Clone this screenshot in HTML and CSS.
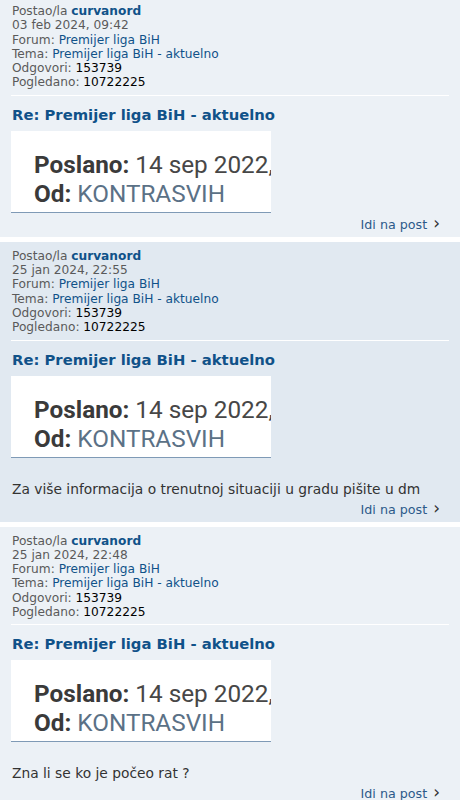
FILE: index.html
```html
<!DOCTYPE html>
<html lang="bs">
<head>
<meta charset="utf-8">
<title>Premijer liga BiH - aktuelno</title>
<link rel="stylesheet" href="styles.css">
</head>
<body>
<div class="posts">
  <div class="post bg1">
    <div class="meta">
      <div>Postao/la <a class="user" href="#">curvanord</a></div>
      <div>03 feb 2024, 09:42</div>
      <div>Forum: <a href="#">Premijer liga BiH</a></div>
      <div>Tema: <a href="#">Premijer liga BiH - aktuelno</a></div>
      <div>Odgovori: <strong>153739</strong></div>
      <div>Pogledano: <strong>10722225</strong></div>
    </div>
    <h3 class="title"><a href="#">Re: Premijer liga BiH - aktuelno</a></h3>
    <div class="content">
      <div class="shot">
        <div class="shot-line"><b>Poslano:</b> 14 sep 2022,</div>
        <div class="shot-line"><b>Od:</b> <span class="shot-user">KONTRASVIH</span></div>
      </div>
    </div>
    <div class="jump"><a href="#">Idi na post <span class="chev">&#x203A;</span></a></div>
  </div>

  <div class="post bg2">
    <div class="meta">
      <div>Postao/la <a class="user" href="#">curvanord</a></div>
      <div>25 jan 2024, 22:55</div>
      <div>Forum: <a href="#">Premijer liga BiH</a></div>
      <div>Tema: <a href="#">Premijer liga BiH - aktuelno</a></div>
      <div>Odgovori: <strong>153739</strong></div>
      <div>Pogledano: <strong>10722225</strong></div>
    </div>
    <h3 class="title"><a href="#">Re: Premijer liga BiH - aktuelno</a></h3>
    <div class="content">
      <div class="shot">
        <div class="shot-line"><b>Poslano:</b> 14 sep 2022,</div>
        <div class="shot-line"><b>Od:</b> <span class="shot-user">KONTRASVIH</span></div>
      </div>
      <p class="text">Za više informacija o trenutnoj situaciji u gradu pišite u dm</p>
    </div>
    <div class="jump"><a href="#">Idi na post <span class="chev">&#x203A;</span></a></div>
  </div>

  <div class="post bg1">
    <div class="meta">
      <div>Postao/la <a class="user" href="#">curvanord</a></div>
      <div>25 jan 2024, 22:48</div>
      <div>Forum: <a href="#">Premijer liga BiH</a></div>
      <div>Tema: <a href="#">Premijer liga BiH - aktuelno</a></div>
      <div>Odgovori: <strong>153739</strong></div>
      <div>Pogledano: <strong>10722225</strong></div>
    </div>
    <h3 class="title"><a href="#">Re: Premijer liga BiH - aktuelno</a></h3>
    <div class="content">
      <div class="shot">
        <div class="shot-line"><b>Poslano:</b> 14 sep 2022,</div>
        <div class="shot-line"><b>Od:</b> <span class="shot-user">KONTRASVIH</span></div>
      </div>
      <p class="text">Zna li se ko je počeo rat ?</p>
    </div>
    <div class="jump"><a href="#">Idi na post <span class="chev">&#x203A;</span></a></div>
  </div>
</div>
</body>
</html>
```

FILE: styles.css
```css
html, body {
  margin: 0;
  padding: 0;
  background: #ffffff;
}

body {
  font-family: "DejaVu Sans", Verdana, sans-serif;
  color: #333333;
}

a {
  text-decoration: none;
  color: #105289;
}

.posts {
  display: flex;
  flex-direction: column;
  gap: 5px;
  margin-top: -3px;
}

.post {
  padding: 7px 11px 4px 11px;
}

.bg1 { background: #ecf1f6; }
.bg2 { background: #e1e9f1; }

.meta {
  font-size: 12.2px;
  line-height: 14.3px;
  color: #5a5a5a;
  padding: 0 1px 5px 1px;
  border-bottom: 1px solid #ffffff;
}

.meta a { color: #105289; }
.meta .user { font-weight: bold; }
.meta strong { color: #000000; font-weight: normal; }

.title {
  margin: 8px 0 0 1px;
  font-size: 14.8px;
  line-height: 21px;
  font-weight: bold;
}

.title a { color: #105289; }

.content {
  margin-top: 6px;
}

.shot {
  width: 260px;
  height: 82px;
  background: #ffffff;
  border-bottom: 1px solid #7f9ab6;
  box-sizing: border-box;
  padding: 19px 0 0 23px;
  overflow: hidden;
  white-space: nowrap;
  font-family: Roboto, "Liberation Sans", sans-serif;
  font-size: 24.3px;
  line-height: 29px;
  color: #474747;
}

.shot b { font-weight: bold; color: #3a3a3a; }
.shot-user { color: #5b7186; }

.text {
  margin: 23px 0 0 1px;
  font-size: 13.8px;
  line-height: 17px;
  color: #333333;
}

.jump {
  text-align: right;
  font-size: 12.7px;
  line-height: 16px;
  margin-top: 2px;
  padding-right: 9px;
}

.jump a { color: #2c5a8a; }

.chev {
  color: #333333;
  font-size: 17px;
  line-height: 16px;
  margin-left: 2px;
}
```
